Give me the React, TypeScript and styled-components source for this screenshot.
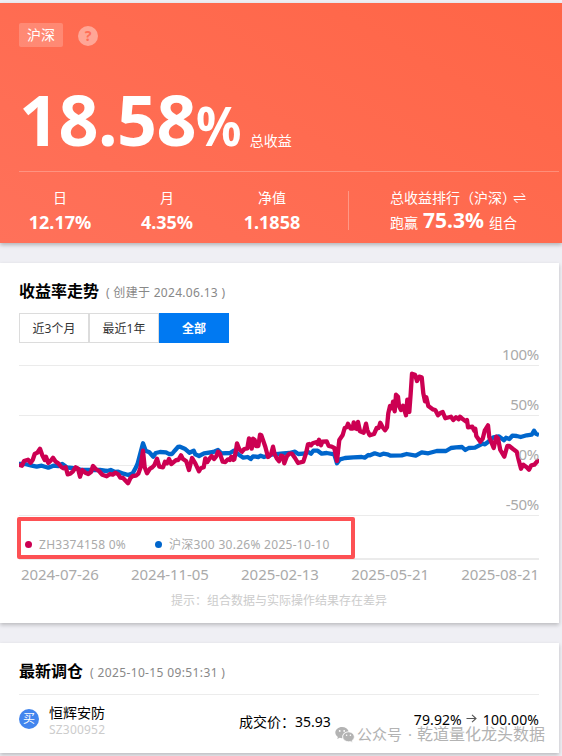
import React from "react";
import styled, { createGlobalStyle } from "styled-components";

const GlobalStyle = createGlobalStyle`
  * { box-sizing: border-box; }
  body {
    margin: 0;
    background: #efeff4;
    font-family: "Noto Sans", "Noto Sans CJK SC", sans-serif;
    color: #000;
  }
`;

const Page = styled.div`
  position: relative;
  width: 562px;
  height: 756px;
  padding-top: 3px;
  overflow: hidden;
  background: #efeff4;
`;

const Hero = styled.header`
  height: 240px;
  padding-top: 20px;
  color: #fff;
  background: linear-gradient(30deg, #ff715a 0%, #ff6546 100%);
  box-shadow: 0 2px 4px rgba(0, 0, 0, 0.25);
`;

const TagRow = styled.div`
  display: flex;
  align-items: center;
  gap: 15px;
  height: 24px;
  padding-left: 19px;
`;

const Tag = styled.span`
  width: 44px;
  height: 24px;
  border-radius: 2px;
  background: rgba(255, 255, 255, 0.2);
  font-size: 14px;
  line-height: 24px;
  text-align: center;
`;

const Help = styled.span`
  width: 20px;
  height: 20px;
  margin-top: 2px;
  border-radius: 50%;
  background: rgba(255, 255, 255, 0.4);
  color: #ff6f58;
  font-size: 14px;
  font-weight: 700;
  line-height: 20px;
  text-align: center;
`;

const TotalRow = styled.div`
  display: flex;
  align-items: baseline;
  height: 125px;
  margin: 0 3px 0 19px;
  padding-top: 32px;
  border-bottom: 1px solid rgba(255, 255, 255, 0.25);
`;

const TotalNumber = styled.strong`
  font-size: 70px;
  line-height: 80px;
  letter-spacing: -0.6px;
`;

const TotalPercent = styled.strong`
  font-size: 53px;
  line-height: 60px;
  transform: scaleX(0.95);
  transform-origin: left;
`;

const TotalLabel = styled.span`
  margin-left: 6px;
  font-size: 14px;
`;

const StatsRow = styled.div`
  display: flex;
  padding: 19px 0 0 7px;
`;

const Stat = styled.div`
  width: 106px;
  margin-top: -1px;
  text-align: center;

  &:nth-child(2) { padding-left: 2px; }
`;

const StatLabel = styled.div`
  font-size: 14px;
  line-height: 16px;
  white-space: nowrap;
`;

const StatValue = styled.div`
  padding-top: 4px;
  font-size: 18px;
  font-weight: 700;
  line-height: 24px;
`;

const Ranking = styled.div`
  height: 39px;
  margin-left: 23px;
  padding-left: 41px;
  border-left: 1px solid rgba(255, 255, 255, 0.3);
`;

const RankTitle = styled(StatLabel)`
  display: flex;
  align-items: center;
  margin-top: -1px;

  svg { margin-left: -3px; }
`;

const RankLine = styled.div`
  display: flex;
  align-items: baseline;
  gap: 5px;
  font-size: 14px;
  line-height: 28px;

  strong { font-size: 21px; }
`;

const Card = styled.section<{ $height: number }>`
  width: 559px;
  height: ${(p) => p.$height}px;
  margin-top: 20px;
  padding: 15px 20px 0 19px;
  background: #fff;
  box-shadow: 0 2px 4px rgba(0, 0, 0, 0.22);
`;

const CardTitle = styled.div`
  display: flex;
  align-items: center;
  height: 26px;
`;

const Heading = styled.h2`
  margin: 0;
  font-size: 16px;
  font-weight: 700;
  line-height: 26px;
`;

const Note = styled.span<{ $spacing: number }>`
  margin-left: 7px;
  padding-top: 3px;
  color: #888;
  font-size: 12px;
  line-height: 24px;
  letter-spacing: ${(p) => p.$spacing}px;
  white-space: pre;
`;

const Ranges = styled.div`
  display: flex;
  margin-top: 9px;
`;

const RangeButton = styled.button<{ $active?: boolean }>`
  width: 70px;
  height: 30px;
  padding: 0;
  border: 1px solid ${(p) => (p.$active ? "#0079f2" : "#dcdcdc")};
  background: ${(p) => (p.$active ? "#0079f2" : "#fff")};
  color: ${(p) => (p.$active ? "#fff" : "#333")};
  font-family: inherit;
  font-size: 12px;
  font-weight: ${(p) => (p.$active ? 700 : 400)};
  line-height: 29px;
`;

const ChartArea = styled.div`
  position: relative;
  height: 217px;
`;

const ChartSvg = styled.svg`
  display: block;
  width: 520px;
  height: 217px;
`;

const AxisLabels = styled.div`
  position: absolute;
  top: 0;
  right: 0;
  display: grid;
  grid-auto-rows: 50px;
  color: #aaa;
  font-size: 15px;
  line-height: 22px;
  letter-spacing: -0.3px;
  text-align: right;
`;

const Legend = styled.div`
  position: absolute;
  left: -2px;
  top: 174px;
  display: flex;
  align-items: center;
  width: 338px;
  height: 42px;
  padding: 14px 0 0 5px;
  border: 4px solid #fd5154;
  border-radius: 2px;
`;

const LegendItem = styled.span<{ $color: string; $width: number }>`
  display: flex;
  align-items: center;
  flex: none;
  width: ${(p) => p.$width}px;
  color: #aaa;
  font-size: 12px;
  line-height: 16px;
  letter-spacing: 0.28px;
  white-space: nowrap;

  &::before {
    content: "";
    width: 7px;
    height: 7px;
    margin: -1px 7px 0 -1px;
    border-radius: 50%;
    background: ${(p) => p.$color};
  }
`;

const DateAxis = styled.div`
  display: flex;
  justify-content: space-between;
  padding: 3px 0 0 2px;
  color: #aaa;
  font-size: 15px;
  line-height: 22px;
  letter-spacing: -0.05px;
`;

const Hint = styled.p`
  margin: 6px 0 0;
  color: #ccc;
  font-size: 12px;
  line-height: 20px;
  text-align: center;
`;

const TradeRow = styled.div`
  display: flex;
  height: 59px;
  margin-top: 10px;
  border-top: 1px solid #ececec;
  font-size: 14px;
`;

const BuyBadge = styled.span`
  width: 20px;
  height: 20px;
  margin-top: 14px;
  border-radius: 50%;
  background: #4285ee;
  color: #fff;
  font-size: 12px;
  line-height: 19px;
  text-align: center;
`;

const Stock = styled.div`
  width: 200px;
  padding: 9px 0 0 10px;
  line-height: 18px;
`;

const StockCode = styled.div`
  color: #ccc;
  font-size: 12px;
  line-height: 15px;
  letter-spacing: 0.2px;
`;

const Price = styled.div`
  flex: 1;
  padding-top: 17px;
  line-height: 20px;
`;

const Position = styled.div`
  display: flex;
  align-items: center;
  height: 20px;
  margin-top: 14px;
  letter-spacing: 0.1px;

  svg { margin: -1px 6px 0 4px; }
`;

const Watermark = styled.div`
  position: absolute;
  left: 335px;
  top: 723px;
  display: flex;
  align-items: center;
  height: 22px;
  color: #b3b3b3;
  font-size: 15px;
  line-height: 22px;
  white-space: pre;
`;

const WatermarkAccount = styled.span`
  width: 62px;
  padding-left: 2px;
  word-spacing: 2px;
`;

const WatermarkName = styled.span`
  font-size: 16px;
`;

type Segment = [originX: number, originY: number, points: string];

/* Samples are stored in thirds of a pixel relative to each segment's origin. */
const trace = (segments: Segment[]) =>
  segments
    .flatMap(([ox, oy, points]) =>
      points.split(" ").map((pair) => {
        const [x, y] = pair.split(",").map(Number);
        return `${(ox + x / 3).toFixed(1)},${(oy + y / 3).toFixed(1)}`;
      })
    )
    .join(" ");

const portfolio = trace([
  [0, 360, "57,314 66,317 72,303 84,299 92,308 98,300 104,282 112,278 120,266 127,286 134,300 138,290 145,309 152,302 159,293 167,305 175,310 183,320 190,325 197,322 203,343 211,341 219,334 227,322 234,326 240,350 247,330 256,338 265,342 273,336 279,318 287,327 297,333 307,344 320,349 330,342 338,344 346,338 355,343 361,353 369,354 384,370 391,355 398,348 408,347 415,341 421,325 429,272 434,322 441,340 450,326 457,322 463,316 471,296 478,320 489,322 495,305 501,310 507,297 514,312 521,306 529,300 535,300"],
  [180, 360, "3,286 8,296 19,304 27,330 36,294 46,310 57,334 62,325 71,322 76,295 82,306 89,295 95,288 102,297 108,290 114,275 120,282 128,305 136,306 144,298 150,300 154,290 160,300 163,298 168,270 171,250 178,268 186,275 193,267 202,265 207,235 213,250 215,266 219,236 224,240 228,258 235,258 240,224 244,226 248,238 256,260 264,291 270,286 274,280 279,260 284,283 291,296 297,304 303,287 308,288 313,310 320,290 328,281 336,281 345,294 354,309 370,305 378,280 384,253 388,252 393,256 398,250 410,246 413,252 417,239 423,256 427,245 440,244 446,258 455,260 463,264 471,303 478,240 488,225 494,204 500,202 504,191 512,206 518,206 521,187 525,205 531,207 534,186 540,214 551,218 558,191 562,210 568,224"],
  [370, 340, "0,286 12,282 20,264 26,264 31,248 38,262 45,271 51,262 55,220 60,198 66,205 69,185 74,214 78,164 84,170 87,198 93,210 99,197 108,226 112,179 118,216 122,160 126,101 135,104 141,123 148,110 155,112 160,160 165,184 169,172 175,198 188,208 196,210 204,226 212,218 218,216 226,235 243,230 250,240 258,232 266,238 270,230 279,238 287,244 291,240 294,262 307,260 313,272 316,266 319,288 331,305 338,296 344,272 354,256 358,292 371,324 379,290 384,295 391,330 403,350 412,318 418,318 428,326 440,335 446,360 453,386 460,374 470,382 477,389 484,376 493,374 500,366 507,358"],
]);

const benchmark = trace([
  [0, 360, "57,312 75,312 92,316 110,320 125,317 145,323 160,317 175,318 187,312 200,322 215,324 230,326 245,330 275,330 300,330 320,333 332,330 345,336 355,335 370,341 385,345 398,340 408,322 413,310 429,250 437,272 448,277 460,290 467,279 480,276 498,277 507,282 516,282 524,272 534,261"],
  [180, 360, "0,260 14,266 28,278 41,272 46,283 57,288 72,280 100,276 114,270 124,280 150,279 162,272 178,285 190,293 203,291 212,297 219,289 235,291 242,287 252,291 280,283 310,280 328,279 345,275 355,282 370,281 385,276 393,281 400,272 413,272 425,281 440,279 463,283 471,310 480,298 495,294 520,292 545,291 554,293 565,285"],
  [370, 340, "0,346 14,340 30,345 40,341 52,343 62,347 95,346 110,342 137,347 155,337 175,340 200,333 228,333 243,324 258,322 276,321 286,330 296,324 315,323 338,311 345,313 355,305 370,292 386,289 402,301 408,293 418,297 427,287 440,288 452,291 470,286 485,284 492,272 498,281 507,285"],
]);

const Chart = () => (
  <ChartSvg viewBox="19 343 520 217">
    {[365, 415, 465, 515].map((y) => (
      <rect key={y} x="19" y={y} width="520" height="1" fill="#ebebeb" />
    ))}
    <rect x="19" y="558" width="520" height="2" fill="#ebebeb" />
    <g fill="none" strokeWidth="4.3" strokeLinejoin="round">
      <polyline points={benchmark} stroke="#0066cc" />
      <polyline points={portfolio} stroke="#cc0052" />
    </g>
  </ChartSvg>
);

const SwapIcon = () => (
  <svg width="13" height="12" viewBox="0 0 13 12" fill="none" stroke="#fff" strokeWidth="1">
    <path d="M0.5 4.5H12L8.5 1M12.5 7.5H1L4.5 11" />
  </svg>
);

const ArrowIcon = () => (
  <svg width="11" height="10" viewBox="0 0 11 10" fill="none" stroke="#555" strokeWidth="1.1">
    <path d="M0.5 4.5H10M6 0.8L10 4.5L6 8.2" />
  </svg>
);

const WechatIcon = () => (
  <svg width="20" height="17" viewBox="0 0 20 17">
    <path fill="#b3b3b3" d="M7 1C3.3 1 .3 3.5.3 6.6c0 1.8 1 3.3 2.6 4.3L2.2 13l2.5-1.2c.8.2 1.5.4 2.3.4h.5C6.6 8.6 9.5 5.5 13.7 5.5 13 2.9 10.3 1 7 1Z" />
    <path fill="#b3b3b3" stroke="#fff" strokeWidth=".7" d="M13.5 5.9c-3.3 0-5.8 2.2-5.8 4.9s2.5 4.9 5.8 4.9c.7 0 1.4-.1 2-.3l2 1-.5-1.7c1.4-.9 2.3-2.3 2.3-3.9 0-2.7-2.6-4.9-5.8-4.9Z" />
    <g fill="#fff">
      <circle cx="4.7" cy="4.9" r=".9" />
      <circle cx="9.2" cy="4.9" r=".9" />
      <circle cx="11.6" cy="9.3" r=".8" />
      <circle cx="15.4" cy="9.3" r=".8" />
    </g>
  </svg>
);

const stats = [
  { label: "日", value: "12.17%" },
  { label: "月", value: "4.35%" },
  { label: "净值", value: "1.1858" },
];

const dates = ["2024-07-26", "2024-11-05", "2025-02-13", "2025-05-21", "2025-08-21"];

export default function App() {
  return (
    <>
      <GlobalStyle />
      <Page>
        <Hero>
          <TagRow>
            <Tag>沪深</Tag>
            <Help>?</Help>
          </TagRow>
          <TotalRow>
            <TotalNumber>18.58</TotalNumber>
            <TotalPercent>%</TotalPercent>
            <TotalLabel>总收益</TotalLabel>
          </TotalRow>
          <StatsRow>
            {stats.map((s) => (
              <Stat key={s.label}>
                <StatLabel>{s.label}</StatLabel>
                <StatValue>{s.value}</StatValue>
              </Stat>
            ))}
            <Ranking>
              <RankTitle>
                总收益排行（沪深）
                <SwapIcon />
              </RankTitle>
              <RankLine>
                跑赢<strong>75.3%</strong>组合
              </RankLine>
            </Ranking>
          </StatsRow>
        </Hero>

        <Card $height={360}>
          <CardTitle>
            <Heading>收益率走势</Heading>
            <Note $spacing={0.3}>( 创建于 2024.06.13 )</Note>
          </CardTitle>
          <Ranges>
            <RangeButton>近3个月</RangeButton>
            <RangeButton>最近1年</RangeButton>
            <RangeButton $active>全部</RangeButton>
          </Ranges>
          <ChartArea>
            <Chart />
            <AxisLabels>
              <span>100%</span>
              <span>50%</span>
              <span>0%</span>
              <span>-50%</span>
            </AxisLabels>
            <Legend>
              <LegendItem $color="#cc0052" $width={130}>ZH3374158 0%</LegendItem>
              <LegendItem $color="#0066cc" $width={180}>沪深300 30.26% 2025-10-10</LegendItem>
            </Legend>
          </ChartArea>
          <DateAxis>
            {dates.map((d) => (
              <span key={d}>{d}</span>
            ))}
          </DateAxis>
          <Hint>提示：组合数据与实际操作结果存在差异</Hint>
        </Card>

        <Card $height={110}>
          <CardTitle>
            <Heading>最新调仓</Heading>
            <Note $spacing={0.37}>( 2025-10-15 09:51:31 )</Note>
          </CardTitle>
          <TradeRow>
            <BuyBadge>买</BuyBadge>
            <Stock>
              恒辉安防
              <StockCode>SZ300952</StockCode>
            </Stock>
            <Price>成交价：35.93</Price>
            <Position>
              79.92%
              <ArrowIcon />
              100.00%
            </Position>
          </TradeRow>
        </Card>

        <Watermark>
          <WechatIcon />
          <WatermarkAccount>公众号 ·</WatermarkAccount>
          <WatermarkName>乾道量化龙头数据</WatermarkName>
        </Watermark>
      </Page>
    </>
  );
}
